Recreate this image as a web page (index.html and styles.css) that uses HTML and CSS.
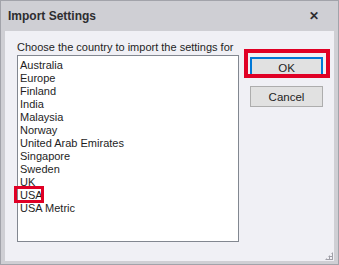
FILE: index.html
```html
<!DOCTYPE html>
<html lang="en">
<head>
  <meta charset="UTF-8" />
  <title>Import Settings</title>
  <link rel="stylesheet" href="styles.css">
</head>
<body>

  <!-- Dialog window -->
  <div class="window">
    <div class="titlebar">
      <span class="title">Import Settings</span>
      <span class="close">&#x2715;</span>
    </div>

    <div class="content">
      <div class="left">
        <label class="prompt">Choose the country to import the settings for</label>
        <ul class="listbox">
          <li>Australia</li>
          <li>Europe</li>
          <li>Finland</li>
          <li>India</li>
          <li>Malaysia</li>
          <li>Norway</li>
          <li>United Arab Emirates</li>
          <li>Singapore</li>
          <li>Sweden</li>
          <li>UK</li>
          <li class="marked">USA</li>
          <li>USA Metric</li>
        </ul>
      </div>

      <div class="buttons">
        <div class="btn-wrap marked-btn">
          <button class="btn default">OK</button>
        </div>
        <button class="btn">Cancel</button>
      </div>

      <div class="grip"></div>
    </div>
  </div>

</body>
</html>
```

FILE: styles.css
```css
body {
  margin: 0;
  font-family: 'Liberation Sans', Arial, sans-serif;
  color: #1e1e1e;
}

.window {
  width: 339px;
  height: 265px;
  box-sizing: border-box;
  border: 1px solid #a2a3aa;
  background-color: #cfcfd4;
  padding: 0 4px 3px 4px;
  display: flex;
  flex-direction: column;
}

.titlebar {
  height: 30px;
  display: flex;
  align-items: center;
  justify-content: space-between;
  padding: 0 15px 0 3px;
}

.title {
  font-size: 12px;
  font-weight: bold;
  color: #2d2d30;
}

.close {
  font-size: 12px;
  font-weight: bold;
  color: #2d2d30;
}

.content {
  position: relative;
  flex: 1;
  background-color: #f0f0f5;
  display: flex;
  padding: 9px 0 0 12px;
}

.left {
  width: 222px;
  display: flex;
  flex-direction: column;
}

.prompt {
  font-size: 11px;
  line-height: 15px;
  white-space: nowrap;
}

.listbox {
  list-style: none;
  margin: 0;
  padding: 3px 0 0 2px;
  width: 222px;
  height: 187px;
  box-sizing: border-box;
  background-color: #fff;
  border: 1px solid #828790;
  font-size: 11px;
  line-height: 13px;
}

.listbox li {
  position: relative;
}

/* red highlight boxes from the screenshot */
.listbox li.marked::after {
  content: "";
  position: absolute;
  left: -6px;
  top: -3px;
  width: 30px;
  height: 17px;
  border: 3px solid #e00025;
  box-sizing: border-box;
}

.buttons {
  display: flex;
  flex-direction: column;
  margin: 17px 0 0 11px;
  gap: 8px;
}

.btn-wrap {
  position: relative;
}

.marked-btn::after {
  content: "";
  position: absolute;
  left: -6px;
  top: -8px;
  width: 86px;
  height: 29px;
  border: 4px solid #e00025;
  box-sizing: border-box;
}

.btn {
  width: 73px;
  height: 21px;
  margin: 0;
  padding: 0;
  font-family: inherit;
  font-size: 11.5px;
  color: #1e1e1e;
  background-color: #e1e1e1;
  border: 1px solid #adadad;
}

.btn.default {
  border: 2px solid #0078d7;
}

.grip {
  position: absolute;
  right: 1px;
  bottom: 1px;
  width: 8px;
  height: 8px;
  background:
    radial-gradient(circle, #a0a0a8 1px, transparent 1.2px) 0 0 / 3px 3px;
  clip-path: polygon(100% 0, 100% 100%, 0 100%);
}
```
